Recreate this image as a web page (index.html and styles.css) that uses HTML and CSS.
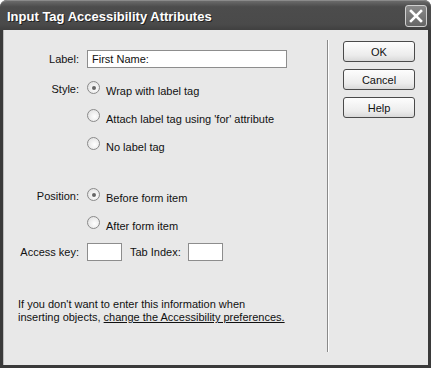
FILE: index.html
```html
<!DOCTYPE html>
<html lang="en">
<head>
    <meta charset="UTF-8">
    <title>Input Tag Accessibility Attributes</title>
    <link rel="stylesheet" href="styles.css">
</head>
<body>
    <div class="window">
        <div class="titlebar">
            <div class="title">Input Tag Accessibility Attributes</div>
            <div class="close">
                <svg width="14" height="14" viewBox="0 0 14 14"><path d="M2 2 L12 12 M12 2 L2 12" stroke="#fff" stroke-width="2.6" stroke-linecap="square"/></svg>
            </div>
        </div>
        <div class="client">
            <div class="form">
                <div class="row">
                    <span class="lbl">Label:</span>
                    <div class="field wide">First Name:</div>
                </div>
                <div class="row gap-sm">
                    <span class="lbl">Style:</span>
                    <span class="radio checked"></span><span class="opt">Wrap with label tag</span>
                </div>
                <div class="row">
                    <span class="lbl"></span>
                    <span class="radio"></span><span class="opt">Attach label tag using 'for' attribute</span>
                </div>
                <div class="row">
                    <span class="lbl"></span>
                    <span class="radio"></span><span class="opt">No label tag</span>
                </div>
                <div class="row gap-lg">
                    <span class="lbl">Position:</span>
                    <span class="radio checked"></span><span class="opt">Before form item</span>
                </div>
                <div class="row">
                    <span class="lbl"></span>
                    <span class="radio"></span><span class="opt">After form item</span>
                </div>
                <div class="row">
                    <span class="lbl">Access key:</span>
                    <div class="field small"></div>
                    <span class="lbl2">Tab Index:</span>
                    <div class="field small"></div>
                </div>
                <p class="note">If you don't want to enter this information when<br>inserting objects, <a href="#">change the Accessibility preferences.</a></p>
            </div>
            <div class="sep"></div>
            <div class="buttons">
                <button>OK</button>
                <button>Cancel</button>
                <button>Help</button>
            </div>
        </div>
    </div>
</body>
</html>
```

FILE: styles.css
```css
body { margin: 0; background: #fff; font-family: 'Liberation Sans', Arial, sans-serif; font-size: 11px; color: #111; }
.window { width: 431px; height: 368px; box-sizing: border-box; background: #3a3a3a; border-radius: 7px 7px 0 0; padding: 0 3px 3px 3px; display: flex; flex-direction: column; }
.titlebar { height: 30px; display: flex; align-items: center; justify-content: space-between; padding: 0 4px 0 4px; background: linear-gradient(#6a6a6a, #4c4c4c 20%, #4a4a4a 80%, #404040); margin: 0 -3px; border-radius: 7px 7px 0 0; border-top: 1px solid #8a8a8a; box-sizing: border-box; }
.title { color: #fff; font-weight: bold; font-size: 13px; padding-left: 3px; padding-top: 1px; text-shadow: 1px 1px 0 #222; }
.close { width: 20px; height: 20px; border: 1px solid #d0d0d0; border-radius: 3px; background: linear-gradient(#8a8a8a, #666); display: flex; align-items: center; justify-content: center; margin-top: 1px; }
.client { flex: 1; background: #e8e8e8; display: flex; border-left: 1px solid #bdbdbd; }
.form { flex: 1; padding: 20px 0 0 13px; display: flex; flex-direction: column; gap: 10px; }
.row { display: flex; align-items: center; height: 18px; }
.gap-sm { margin-top: 2px; }
.gap-lg { margin-top: 23px; }
.lbl { width: 62px; text-align: right; padding-right: 8px; flex-shrink: 0; }
.lbl2 { padding: 0 7px 0 8px; }
.field { height: 18px; box-sizing: border-box; border: 1px solid #8d8d8d; background: #fff; padding: 2px 4px; line-height: 13px; }
.wide { width: 200px; }
.small { width: 35px; }
.radio { width: 13px; height: 13px; box-sizing: border-box; border: 1px solid #8a8a8a; border-radius: 50%; background: radial-gradient(circle at 60% 60%, #fff, #dcdcdc); position: relative; flex-shrink: 0; margin-top: -3px; }
.radio.checked::after { content: ""; position: absolute; left: 3.5px; top: 3.5px; width: 4px; height: 4px; border-radius: 50%; background: #666; }
.opt { padding-left: 6px; margin-top: 3px; }
.note { margin: 27px 0 0 1px; line-height: 13px; }
.note a { color: #111; text-decoration: underline; }
.sep { width: 1px; border-right: 1px solid #fff; background: #8a8a8a; margin: 10px 0 13px 0; }
.buttons { width: 99px; padding: 11px 0 0 14px; box-sizing: border-box; display: flex; flex-direction: column; gap: 7px; }
.buttons button { width: 72px; height: 21px; font-family: inherit; font-size: 11px; color: #111; border: 1px solid #4a4a4a; border-radius: 3px; background: linear-gradient(#fdfdfd, #ececec 70%, #d9d9d9); padding: 0; }
```
